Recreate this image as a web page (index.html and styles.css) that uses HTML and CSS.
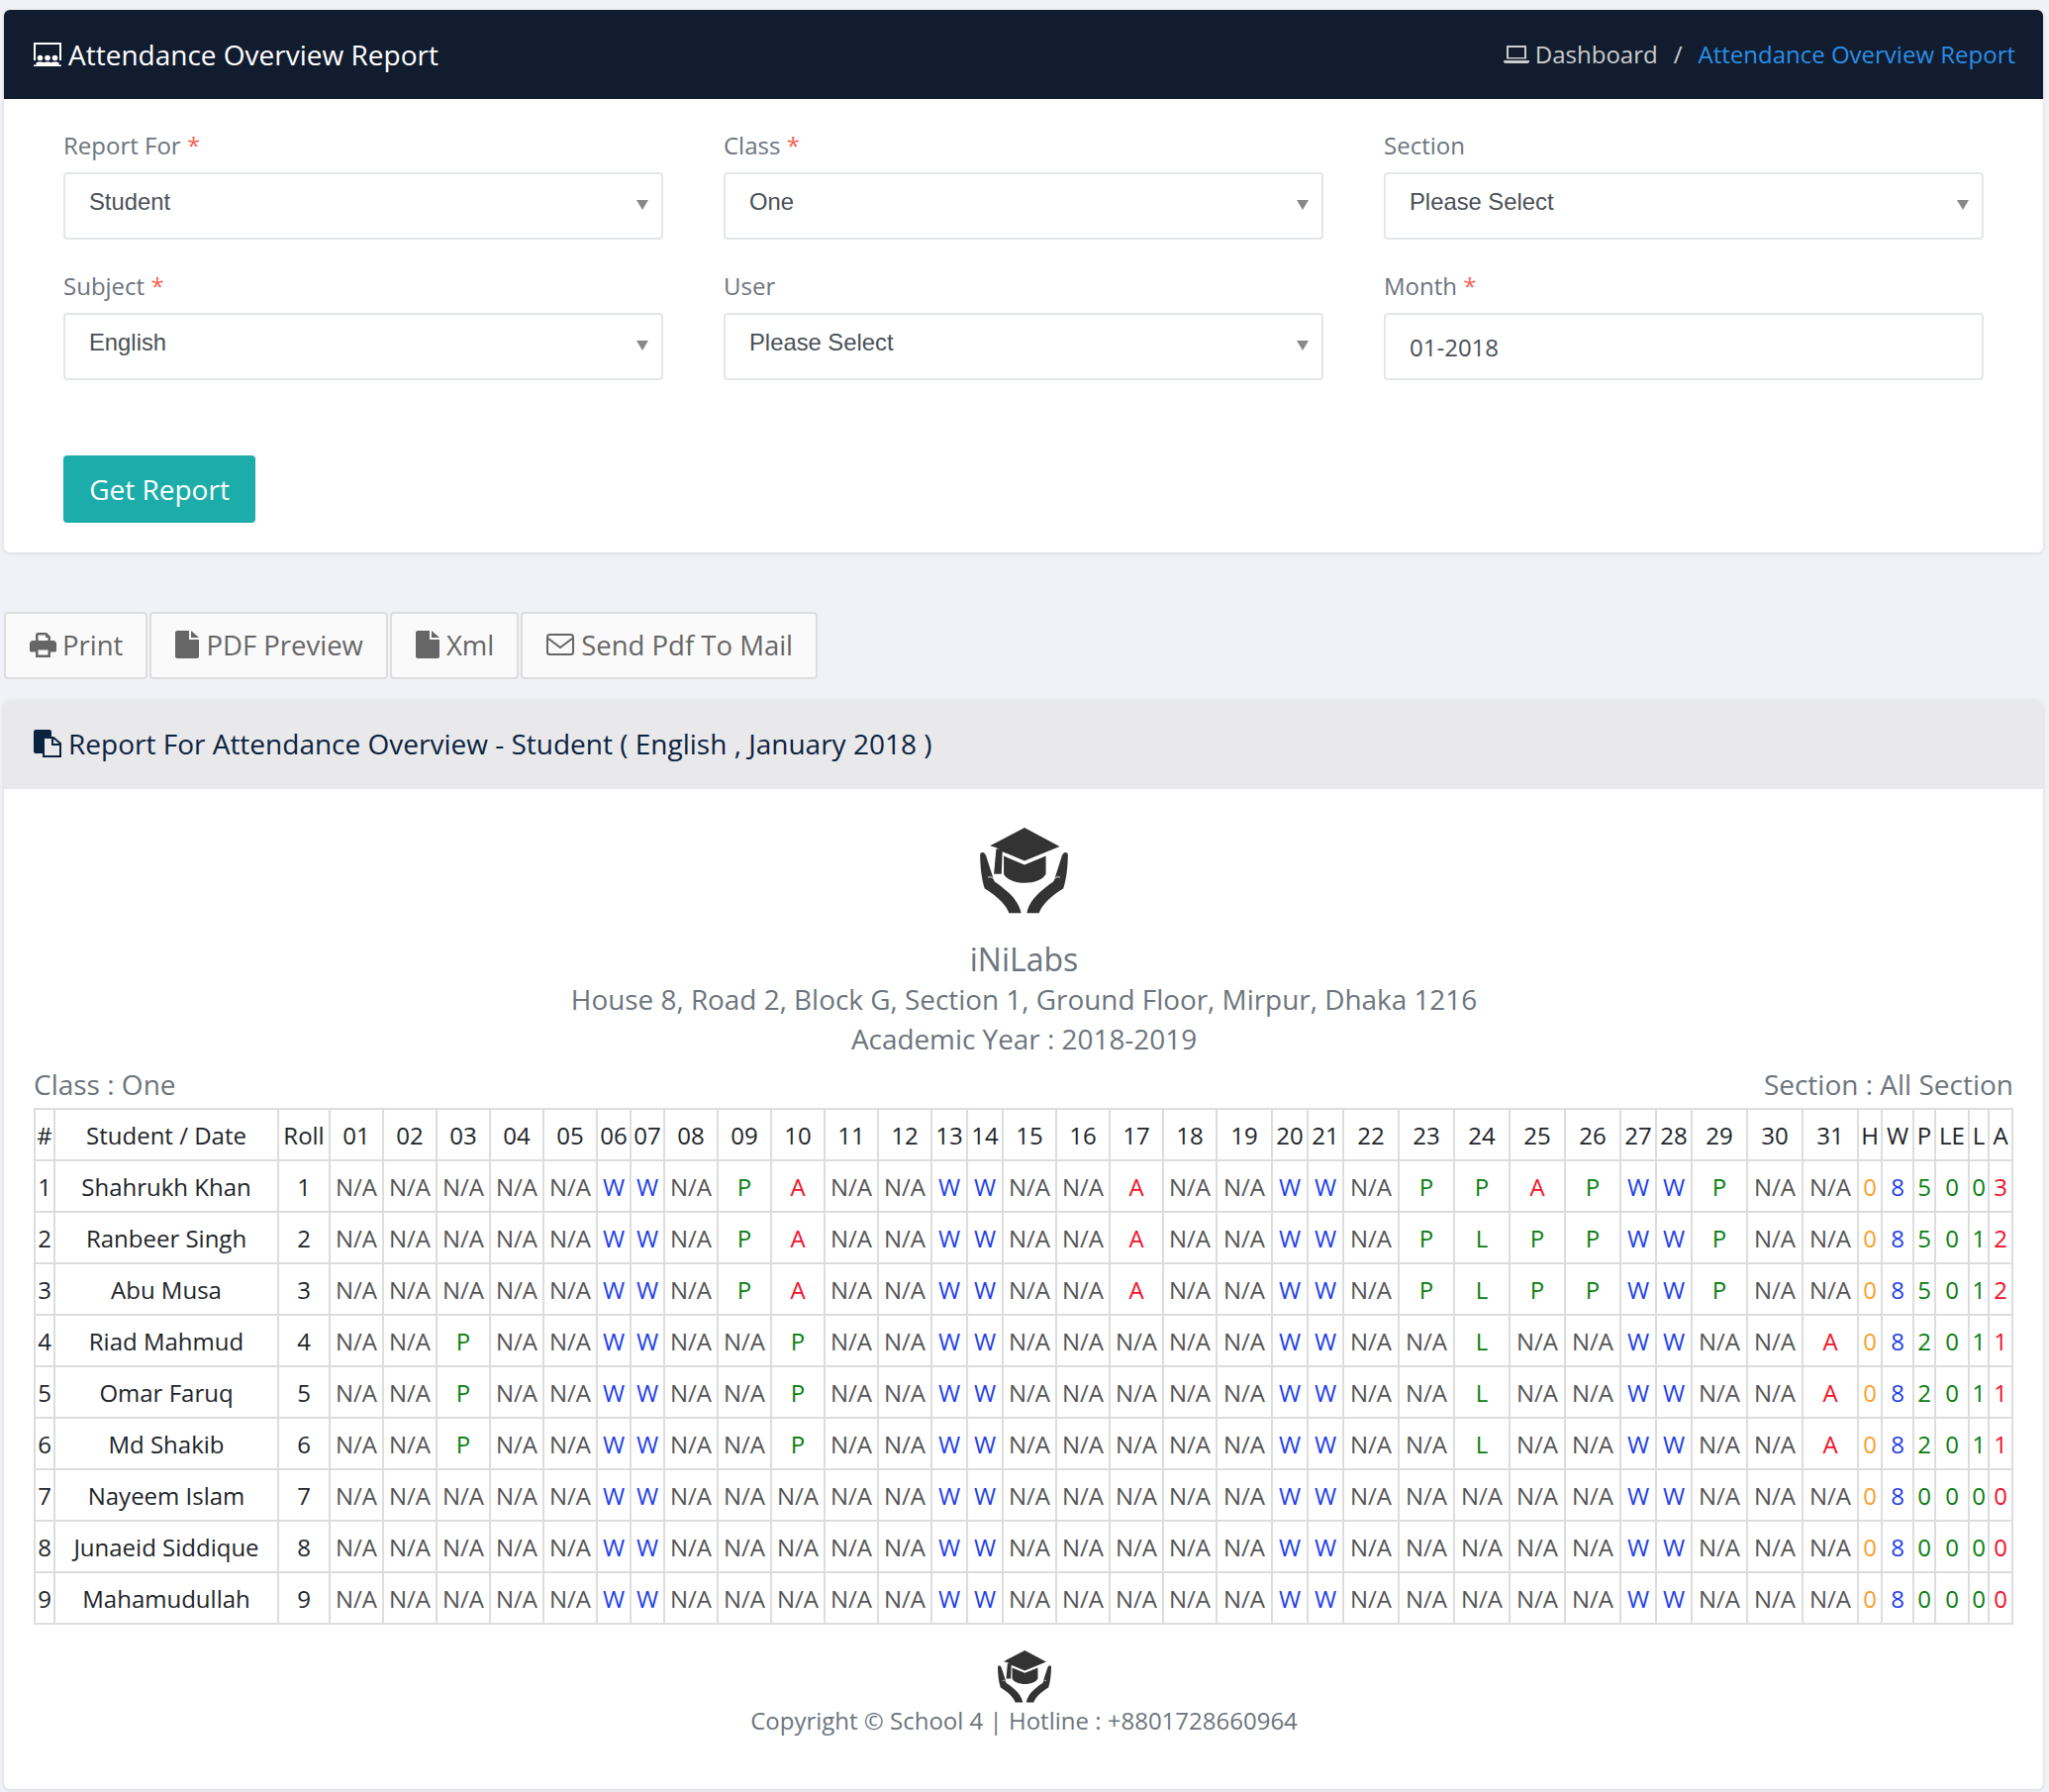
FILE: index.html
```html
<!doctype html>
<html lang="en">
<head>
  <meta charset="utf-8">
  <title>Attendance Overview Report</title>
  <link rel="stylesheet" href="styles.css">
</head>
<body>
  <svg class="defs" width="0" height="0">
    <symbol id="logo" viewBox="118 45 267 262">
      <path d="M148 100 253 45 360 102 253 146 186 118 168 106Z"/>
      <path d="M190 131 253 158 318 131V186C300 222 208 222 190 186Z"/>
      <path d="M167 109 186 113 183 186 160 186Z"/>
      <path d="M118 126C122 116 133 120 136 130L160 205C175 222 232 250 243 305H206C195 275 165 250 132 230 122 200 118 160 118 126Z"/>
      <path d="M385 126C381 116 370 120 367 130L343 205C328 222 271 250 260 305H297C308 275 338 250 371 230 381 200 385 160 385 126Z"/>
      <path d="M142 196C152 192 160 198 166 212" fill="none" stroke="#fff" stroke-width="3"/>
      <path d="M361 196C351 192 343 198 337 212" fill="none" stroke="#fff" stroke-width="3"/>
    </symbol>
    <symbol id="file" viewBox="0 0 24 28">
      <path d="M2 0H14V9H24V26C24 27 23 28 22 28H2C1 28 0 27 0 26V2C0 1 1 0 2 0ZM16 0 24 7H16Z"/>
    </symbol>
  </svg>

  <section class="panel">
    <header class="page-head">
      <h1 class="page-title">
        <svg class="ico-title" viewBox="0 0 28 25" width="28" height="25">
          <path d="M1 18V1H27V18" fill="none" stroke="#fff" stroke-width="2"/>
          <path d="M0 24H28V22.500H0Z" fill="#fff"/>
          <circle cx="6.500" cy="15.500" r="2.800" fill="#fff"/>
          <circle cx="14" cy="15.500" r="2.800" fill="#fff"/>
          <circle cx="21.500" cy="15.500" r="2.800" fill="#fff"/>
          <path d="M2.500 23V20.500C3 19 10 19 10.500 20.500V23ZM10 23V20.500C10.500 19 17.500 19 18 20.500V23ZM17.500 23V20.500C18 19 25 19 25.500 20.500V23Z" fill="#fff"/>
        </svg>
        Attendance Overview Report
      </h1>
      <nav class="crumbs">
        <svg class="ico-laptop" viewBox="0 0 26 20" width="26" height="20">
          <path d="M4 14V2H22V14" fill="none" stroke="#ccc" stroke-width="2"/>
          <path d="M3 13H23V14.500H3ZM0 16H26V17C26 18 25 19 24 19H2C1 19 0 18 0 17Z" fill="#ccc"/>
        </svg>
        <span>Dashboard</span>
        <span class="crumb-sep">/</span>
        <span class="crumb-active">Attendance Overview Report</span>
      </nav>
    </header>

    <form class="report-form">
      <div class="form-grid">
        <div class="field">
          <label>Report For <span class="req">*</span></label>
          <div class="select">Student</div>
        </div>
        <div class="field">
          <label>Class <span class="req">*</span></label>
          <div class="select">One</div>
        </div>
        <div class="field">
          <label>Section</label>
          <div class="select">Please Select</div>
        </div>
        <div class="field">
          <label>Subject <span class="req">*</span></label>
          <div class="select">English</div>
        </div>
        <div class="field">
          <label>User</label>
          <div class="select">Please Select</div>
        </div>
        <div class="field">
          <label>Month <span class="req">*</span></label>
          <div class="date-input">01-2018</div>
        </div>
      </div>
      <button type="button" class="btn-report">Get Report</button>
    </form>
  </section>

  <div class="actions">
    <button type="button" class="action">
      <svg viewBox="0 0 27 25" width="27" height="25">
        <path d="M6 10V2.500C6 1 7 0 8.500 0H17L21 4V10H18.500V5H16V2.500H8.500V10Z" fill="#666"/>
        <path d="M3 8H24C25.500 8 27 9.500 27 11V18C27 19 26 19.500 25 19.500H21V16.500H6V19.500H2C1 19.500 0 19 0 18V11C0 9.500 1.500 8 3 8Z" fill="#666"/>
        <path d="M6 15H21V25H6ZM8.500 17.500V22.500H18.500V17.500Z" fill="#666" fill-rule="evenodd"/>
      </svg>
      Print
    </button>
    <button type="button" class="action">
      <svg class="ico-file" width="24" height="28"><use href="#file"/></svg>
      PDF Preview
    </button>
    <button type="button" class="action">
      <svg class="ico-file" width="24" height="28"><use href="#file"/></svg>
      Xml
    </button>
    <button type="button" class="action">
      <svg class="ico-mail" viewBox="0 0 28 22" width="28" height="22">
        <rect x="1" y="1" width="26" height="20" rx="2.500" fill="none" stroke="#666" stroke-width="2"/>
        <path d="M2 5 14 14 26 5" fill="none" stroke="#666" stroke-width="2"/>
      </svg>
      Send Pdf To Mail
    </button>
  </div>

  <section class="panel">
    <header class="report-head">
      <svg class="ico-report" viewBox="0 0 28 28" width="28" height="28">
        <path d="M2 0H16C17 0 18 1 18 2V7H10V24H2C1 24 0 23 0 22V2C0 1 1 0 2 0Z" fill="#0c2340"/>
        <path d="M10 8H20L27 14V27H10Z" fill="none" stroke="#0c2340" stroke-width="2"/>
        <path d="M19 8V15H27" fill="none" stroke="#0c2340" stroke-width="2"/>
      </svg>
      <h2 class="report-title">Report For Attendance Overview - Student ( English , January 2018 )</h2>
    </header>

    <div class="report-body">
      <div class="school">
        <svg class="logo-big"><use href="#logo"/></svg>
        <div class="school-name">iNiLabs</div>
        <div class="school-line">House 8, Road 2, Block G, Section 1, Ground Floor, Mirpur, Dhaka 1216</div>
        <div class="school-line">Academic Year : 2018-2019</div>
      </div>

      <div class="meta">
        <span>Class : One</span>
        <span>Section : All Section</span>
      </div>

      <table class="attendance">
        <colgroup>
          <col class="c-20"><col class="c-226"><col class="c-52">
          <col class="c-54"><col class="c-54"><col class="c-54"><col class="c-54"><col class="c-54">
          <col class="c-34"><col class="c-34">
          <col class="c-54"><col class="c-54"><col class="c-54"><col class="c-54"><col class="c-54">
          <col class="c-36"><col class="c-36">
          <col class="c-54"><col class="c-54"><col class="c-54"><col class="c-54"><col class="c-56">
          <col class="c-36"><col class="c-36">
          <col class="c-56"><col class="c-56"><col class="c-56"><col class="c-56"><col class="c-56">
          <col class="c-36"><col class="c-36">
          <col class="c-56"><col class="c-56"><col class="c-56">
          <col class="c-24"><col class="c-32"><col class="c-22"><col class="c-34"><col class="c-20"><col class="c-24">
        </colgroup>
        <thead>
          <tr>
            <th>#</th><th>Student / Date</th><th>Roll</th>
            <th>01</th><th>02</th><th>03</th><th>04</th><th>05</th><th>06</th><th>07</th><th>08</th><th>09</th><th>10</th>
            <th>11</th><th>12</th><th>13</th><th>14</th><th>15</th><th>16</th><th>17</th><th>18</th><th>19</th><th>20</th>
            <th>21</th><th>22</th><th>23</th><th>24</th><th>25</th><th>26</th><th>27</th><th>28</th><th>29</th><th>30</th><th>31</th>
            <th>H</th><th>W</th><th>P</th><th>LE</th><th>L</th><th>A</th>
          </tr>
        </thead>
        <tbody>
          <tr class="row">
            <td class="name">1</td><td class="name">Shahrukh Khan</td><td class="name">1</td>
            <td>N/A</td><td>N/A</td><td>N/A</td><td>N/A</td><td>N/A</td><td class="wk">W</td><td class="wk">W</td><td>N/A</td><td class="pr">P</td><td class="ab">A</td>
            <td>N/A</td><td>N/A</td><td class="wk">W</td><td class="wk">W</td><td>N/A</td><td>N/A</td><td class="ab">A</td><td>N/A</td><td>N/A</td><td class="wk">W</td>
            <td class="wk">W</td><td>N/A</td><td class="pr">P</td><td class="pr">P</td><td class="ab">A</td><td class="pr">P</td><td class="wk">W</td><td class="wk">W</td><td class="pr">P</td><td>N/A</td><td>N/A</td>
            <td class="hd">0</td><td class="wk">8</td><td class="pr">5</td><td class="pr">0</td><td class="pr">0</td><td class="ab">3</td>
          </tr>
          <tr class="row">
            <td class="name">2</td><td class="name">Ranbeer Singh</td><td class="name">2</td>
            <td>N/A</td><td>N/A</td><td>N/A</td><td>N/A</td><td>N/A</td><td class="wk">W</td><td class="wk">W</td><td>N/A</td><td class="pr">P</td><td class="ab">A</td>
            <td>N/A</td><td>N/A</td><td class="wk">W</td><td class="wk">W</td><td>N/A</td><td>N/A</td><td class="ab">A</td><td>N/A</td><td>N/A</td><td class="wk">W</td>
            <td class="wk">W</td><td>N/A</td><td class="pr">P</td><td class="pr">L</td><td class="pr">P</td><td class="pr">P</td><td class="wk">W</td><td class="wk">W</td><td class="pr">P</td><td>N/A</td><td>N/A</td>
            <td class="hd">0</td><td class="wk">8</td><td class="pr">5</td><td class="pr">0</td><td class="pr">1</td><td class="ab">2</td>
          </tr>
          <tr class="row">
            <td class="name">3</td><td class="name">Abu Musa</td><td class="name">3</td>
            <td>N/A</td><td>N/A</td><td>N/A</td><td>N/A</td><td>N/A</td><td class="wk">W</td><td class="wk">W</td><td>N/A</td><td class="pr">P</td><td class="ab">A</td>
            <td>N/A</td><td>N/A</td><td class="wk">W</td><td class="wk">W</td><td>N/A</td><td>N/A</td><td class="ab">A</td><td>N/A</td><td>N/A</td><td class="wk">W</td>
            <td class="wk">W</td><td>N/A</td><td class="pr">P</td><td class="pr">L</td><td class="pr">P</td><td class="pr">P</td><td class="wk">W</td><td class="wk">W</td><td class="pr">P</td><td>N/A</td><td>N/A</td>
            <td class="hd">0</td><td class="wk">8</td><td class="pr">5</td><td class="pr">0</td><td class="pr">1</td><td class="ab">2</td>
          </tr>
          <tr class="row">
            <td class="name">4</td><td class="name">Riad Mahmud</td><td class="name">4</td>
            <td>N/A</td><td>N/A</td><td class="pr">P</td><td>N/A</td><td>N/A</td><td class="wk">W</td><td class="wk">W</td><td>N/A</td><td>N/A</td><td class="pr">P</td>
            <td>N/A</td><td>N/A</td><td class="wk">W</td><td class="wk">W</td><td>N/A</td><td>N/A</td><td>N/A</td><td>N/A</td><td>N/A</td><td class="wk">W</td>
            <td class="wk">W</td><td>N/A</td><td>N/A</td><td class="pr">L</td><td>N/A</td><td>N/A</td><td class="wk">W</td><td class="wk">W</td><td>N/A</td><td>N/A</td><td class="ab">A</td>
            <td class="hd">0</td><td class="wk">8</td><td class="pr">2</td><td class="pr">0</td><td class="pr">1</td><td class="ab">1</td>
          </tr>
          <tr class="row">
            <td class="name">5</td><td class="name">Omar Faruq</td><td class="name">5</td>
            <td>N/A</td><td>N/A</td><td class="pr">P</td><td>N/A</td><td>N/A</td><td class="wk">W</td><td class="wk">W</td><td>N/A</td><td>N/A</td><td class="pr">P</td>
            <td>N/A</td><td>N/A</td><td class="wk">W</td><td class="wk">W</td><td>N/A</td><td>N/A</td><td>N/A</td><td>N/A</td><td>N/A</td><td class="wk">W</td>
            <td class="wk">W</td><td>N/A</td><td>N/A</td><td class="pr">L</td><td>N/A</td><td>N/A</td><td class="wk">W</td><td class="wk">W</td><td>N/A</td><td>N/A</td><td class="ab">A</td>
            <td class="hd">0</td><td class="wk">8</td><td class="pr">2</td><td class="pr">0</td><td class="pr">1</td><td class="ab">1</td>
          </tr>
          <tr class="row">
            <td class="name">6</td><td class="name">Md Shakib</td><td class="name">6</td>
            <td>N/A</td><td>N/A</td><td class="pr">P</td><td>N/A</td><td>N/A</td><td class="wk">W</td><td class="wk">W</td><td>N/A</td><td>N/A</td><td class="pr">P</td>
            <td>N/A</td><td>N/A</td><td class="wk">W</td><td class="wk">W</td><td>N/A</td><td>N/A</td><td>N/A</td><td>N/A</td><td>N/A</td><td class="wk">W</td>
            <td class="wk">W</td><td>N/A</td><td>N/A</td><td class="pr">L</td><td>N/A</td><td>N/A</td><td class="wk">W</td><td class="wk">W</td><td>N/A</td><td>N/A</td><td class="ab">A</td>
            <td class="hd">0</td><td class="wk">8</td><td class="pr">2</td><td class="pr">0</td><td class="pr">1</td><td class="ab">1</td>
          </tr>
          <tr class="row">
            <td class="name">7</td><td class="name">Nayeem Islam</td><td class="name">7</td>
            <td>N/A</td><td>N/A</td><td>N/A</td><td>N/A</td><td>N/A</td><td class="wk">W</td><td class="wk">W</td><td>N/A</td><td>N/A</td><td>N/A</td>
            <td>N/A</td><td>N/A</td><td class="wk">W</td><td class="wk">W</td><td>N/A</td><td>N/A</td><td>N/A</td><td>N/A</td><td>N/A</td><td class="wk">W</td>
            <td class="wk">W</td><td>N/A</td><td>N/A</td><td>N/A</td><td>N/A</td><td>N/A</td><td class="wk">W</td><td class="wk">W</td><td>N/A</td><td>N/A</td><td>N/A</td>
            <td class="hd">0</td><td class="wk">8</td><td class="pr">0</td><td class="pr">0</td><td class="pr">0</td><td class="ab">0</td>
          </tr>
          <tr class="row">
            <td class="name">8</td><td class="name">Junaeid Siddique</td><td class="name">8</td>
            <td>N/A</td><td>N/A</td><td>N/A</td><td>N/A</td><td>N/A</td><td class="wk">W</td><td class="wk">W</td><td>N/A</td><td>N/A</td><td>N/A</td>
            <td>N/A</td><td>N/A</td><td class="wk">W</td><td class="wk">W</td><td>N/A</td><td>N/A</td><td>N/A</td><td>N/A</td><td>N/A</td><td class="wk">W</td>
            <td class="wk">W</td><td>N/A</td><td>N/A</td><td>N/A</td><td>N/A</td><td>N/A</td><td class="wk">W</td><td class="wk">W</td><td>N/A</td><td>N/A</td><td>N/A</td>
            <td class="hd">0</td><td class="wk">8</td><td class="pr">0</td><td class="pr">0</td><td class="pr">0</td><td class="ab">0</td>
          </tr>
          <tr class="row">
            <td class="name">9</td><td class="name">Mahamudullah</td><td class="name">9</td>
            <td>N/A</td><td>N/A</td><td>N/A</td><td>N/A</td><td>N/A</td><td class="wk">W</td><td class="wk">W</td><td>N/A</td><td>N/A</td><td>N/A</td>
            <td>N/A</td><td>N/A</td><td class="wk">W</td><td class="wk">W</td><td>N/A</td><td>N/A</td><td>N/A</td><td>N/A</td><td>N/A</td><td class="wk">W</td>
            <td class="wk">W</td><td>N/A</td><td>N/A</td><td>N/A</td><td>N/A</td><td>N/A</td><td class="wk">W</td><td class="wk">W</td><td>N/A</td><td>N/A</td><td>N/A</td>
            <td class="hd">0</td><td class="wk">8</td><td class="pr">0</td><td class="pr">0</td><td class="pr">0</td><td class="ab">0</td>
          </tr>
        </tbody>
      </table>

      <footer class="report-foot">
        <svg class="logo-small"><use href="#logo"/></svg>
        <div class="copyright">Copyright © School 4 | Hotline : +8801728660964</div>
      </footer>
    </div>
  </section>
</body>
</html>
```

FILE: styles.css
```css
html,
body {
  margin: 0;
  padding: 0;
  background: #f1f2f7;
}

body {
  padding: 10px 6px 4px 4px;
  font-family: "Open Sans", sans-serif;
  font-size: 24px;
  color: #6c757d;
}

.defs {
  position: absolute;
}

.panel {
  background: #fff;
  border-radius: 6px;
  box-shadow: 0 1px 4px rgba(0, 0, 0, 0.12);
  overflow: hidden;
}

.page-head {
  height: 90px;
  display: flex;
  align-items: center;
  justify-content: space-between;
  padding: 0 28px 0 30px;
  background: #111c2f;
}

.page-title {
  margin: 0;
  display: flex;
  align-items: center;
  gap: 7px;
  font-size: 28px;
  font-weight: 400;
  color: #fff;
}

.crumbs {
  display: flex;
  align-items: center;
  padding-bottom: 1px;
  font-size: 24px;
  color: #ccc;
}

.ico-laptop {
  margin-right: 6px;
}

.crumb-sep {
  margin: 0 16px;
}

.crumb-active {
  color: #2a8fe6;
}

.report-form {
  padding: 30px 60px;
}

.form-grid {
  display: grid;
  grid-template-columns: repeat(3, 1fr);
  column-gap: 61px;
  row-gap: 30px;
}

.field label {
  display: block;
  height: 36px;
  line-height: 34px;
  margin-bottom: 8px;
  color: #6c757d;
}

.req {
  color: #f95f53;
}

.select,
.date-input {
  box-sizing: border-box;
  height: 68px;
  padding: 0 24px;
  border: 2px solid #e4e7ea;
  border-radius: 4px;
  color: #495057;
  background: #fff;
}

.select {
  position: relative;
  font-family: "Liberation Sans", Arial, sans-serif;
  font-size: 23.800px;
  line-height: 56px;
}

.select::after {
  content: "";
  position: absolute;
  right: 13px;
  top: 26px;
  border-left: 6px solid transparent;
  border-right: 6px solid transparent;
  border-top: 10px solid #888;
}

.date-input {
  line-height: 66px;
}

.btn-report {
  display: block;
  margin-top: 76px;
  width: 194px;
  height: 68px;
  padding: 0;
  border: 0;
  border-radius: 4px;
  background: #1cadaa;
  color: #fff;
  font-family: inherit;
  font-size: 28px;
}

.actions {
  display: flex;
  gap: 2px;
  margin: 60px 0 21px;
}

.action {
  box-sizing: border-box;
  height: 68px;
  display: flex;
  align-items: center;
  gap: 6px;
  padding: 0 23px 2px 24px;
  border: 2px solid #ddd;
  border-radius: 4px;
  background: #fafafa;
  color: #666;
  font-family: inherit;
  font-size: 27.500px;
}

.ico-file {
  fill: #666;
  margin-right: 1px;
}

.ico-mail {
  margin-right: 1px;
}

.report-head {
  height: 90px;
  display: flex;
  align-items: center;
  gap: 7px;
  padding: 0 30px 2px;
  box-sizing: border-box;
  background: #e9e9eb;
}

.report-title {
  margin: 0;
  font-size: 28px;
  font-weight: 400;
  color: #0c2340;
}

.report-body {
  box-sizing: border-box;
  height: 1010px;
  padding: 39px 29px 0 30px;
}

.school {
  text-align: center;
  font-size: 27.900px;
  line-height: 40px;
}

.school-name {
  font-size: 32px;
}

.logo-big {
  display: block;
  width: 89px;
  height: 87px;
  margin: 0 auto 26px;
  fill: #333;
}

.meta {
  display: flex;
  justify-content: space-between;
  font-size: 28px;
  line-height: 40px;
  margin: 6px 0 4px;
  padding-right: 1px;
}

.attendance {
  table-layout: fixed;
  width: 2000px;
  border-collapse: collapse;
  font-size: 24px;
  color: #212529;
}

.attendance th,
.attendance td {
  height: 50px;
  padding: 0;
  border: 2px solid #ddd;
  text-align: center;
  font-weight: 400;
  white-space: nowrap;
  color: #555;
}

.attendance th,
.attendance td.name {
  color: #212529;
}

.attendance td.wk {
  color: #1f3fe8;
}

.attendance td.pr {
  color: #0a8010;
}

.attendance td.ab {
  color: #f5102a;
}

.attendance td.hd {
  color: #f9a02c;
}

.c-20 { width: 20px; }
.c-22 { width: 22px; }
.c-24 { width: 24px; }
.c-32 { width: 32px; }
.c-34 { width: 34px; }
.c-36 { width: 36px; }
.c-52 { width: 52px; }
.c-54 { width: 54px; }
.c-56 { width: 56px; }
.c-226 { width: 226px; }

.report-foot {
  text-align: center;
  margin-top: 26px;
}

.logo-small {
  display: block;
  width: 54px;
  height: 53px;
  margin: 0 auto;
  fill: #333;
}

.copyright {
  line-height: 36px;
}
```
